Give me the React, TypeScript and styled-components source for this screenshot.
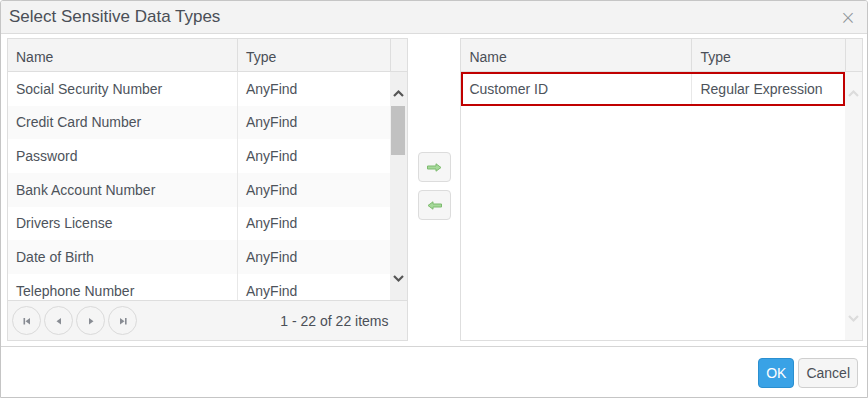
import styled, { createGlobalStyle } from 'styled-components';

const GlobalStyle = createGlobalStyle`
  html, body {
    margin: 0;
    padding: 0;
    background: #fff;
  }
  body {
    font-family: "Liberation Sans", Arial, sans-serif;
    font-size: 14px;
    color: #4d535b;
  }
`;

const leftRows = [
  { name: 'Social Security Number', type: 'AnyFind' },
  { name: 'Credit Card Number', type: 'AnyFind' },
  { name: 'Password', type: 'AnyFind' },
  { name: 'Bank Account Number', type: 'AnyFind' },
  { name: 'Drivers License', type: 'AnyFind' },
  { name: 'Date of Birth', type: 'AnyFind' },
  { name: 'Telephone Number', type: 'AnyFind' },
];

const rightRows = [{ name: 'Customer ID', type: 'Regular Expression' }];

const Dialog = styled.div`
  width: 868px;
  height: 398px;
  box-sizing: border-box;
  border: 1px solid #c5c5c5;
  border-radius: 3px 3px 0 0;
  display: flex;
  flex-direction: column;
  background: #fff;
  overflow: hidden;
`;

const TitleBar = styled.div`
  height: 32px;
  flex: 0 0 auto;
  background: #f3f3f3;
  border-bottom: 1px solid #dcdcdc;
  display: flex;
  align-items: center;
  justify-content: space-between;
  padding: 0 8px 0 8px;
`;

const Title = styled.div`
  font-size: 17px;
  color: #4a4f57;
`;

const CloseBtn = styled.span`
  font-size: 19px;
  font-family: "DejaVu Sans", sans-serif;
  font-weight: 300;
  color: #8e9399;
  line-height: 1;
  margin-right: 3px;
`;

const Content = styled.div`
  flex: 0 0 auto;
  display: flex;
  padding: 4px 4px 5px 6px;
  border-bottom: 1px solid #d5d5d5;
`;

const Grid = styled.div<{ $width: number }>`
  width: ${({ $width }) => $width}px;
  height: 303px;
  box-sizing: border-box;
  border: 1px solid #dedede;
  display: flex;
  flex-direction: column;
  overflow: hidden;
`;

const HeaderRow = styled.div<{ $cols: string }>`
  display: grid;
  grid-template-columns: ${({ $cols }) => $cols};
  height: 32px;
  flex: 0 0 auto;
  background: #f4f4f4;
  border-bottom: 1px solid #dedede;
`;

const HeaderCell = styled.div<{ $last?: boolean }>`
  display: flex;
  align-items: center;
  padding-left: 8px;
  font-size: 14px;
  color: #4a4f57;
  border-right: ${({ $last }) => ($last ? 'none' : '1px solid #dedede')};
  padding-top: 4px;
`;

const Body = styled.div`
  flex: 1;
  display: flex;
  min-height: 0;
`;

const RowsArea = styled.div`
  flex: 1;
  overflow: hidden;
`;

const Row = styled.div<{ $cols: string; $alt?: boolean }>`
  display: grid;
  grid-template-columns: ${({ $cols }) => $cols};
  height: 33.67px;
  background: ${({ $alt }) => ($alt ? '#fafafa' : '#fff')};
`;

const Cell = styled.div<{ $last?: boolean }>`
  display: flex;
  align-items: center;
  padding-left: 8px;
  white-space: nowrap;
  border-right: ${({ $last }) => ($last ? 'none' : '1px solid #e8e8e8')};
`;

const SelectedRow = styled(Row)`
  outline: 2px solid #c00000;
  outline-offset: -2px;
`;

const ScrollTrack = styled.div<{ $faded?: boolean }>`
  width: 17px;
  background: ${({ $faded }) => ($faded ? '#f6f6f6' : '#f0f0f0')};
  display: flex;
  flex-direction: column;
  align-items: center;
`;

const ScrollArrow = styled.div<{ $down?: boolean }>`
  height: 34px;
  box-sizing: border-box;
  display: flex;
  justify-content: center;
  align-items: ${({ $down }) => ($down ? 'flex-start' : 'flex-end')};
  padding: ${({ $down }) => ($down ? '9px 0 0 0' : '0 0 9px 0')};
`;

const ScrollThumb = styled.div`
  width: 14px;
  height: 49px;
  background: #c1c1c1;
`;

const ScrollSpacer = styled.div`
  flex: 1;
`;

const Pager = styled.div`
  height: 39px;
  flex: 0 0 auto;
  background: #f5f5f5;
  border-top: 1px solid #dedede;
  display: flex;
  align-items: center;
  padding: 0 18px 0 4px;
`;

const PagerBtns = styled.div`
  display: flex;
  gap: 3px;
  flex: 1;
`;

const PagerBtn = styled.div`
  width: 27px;
  height: 27px;
  border-radius: 50%;
  border: 1px solid #dadada;
  display: flex;
  align-items: center;
  justify-content: center;
`;

const PagerInfo = styled.div`
  font-size: 14px;
  color: #4a4f57;
`;

const Middle = styled.div`
  width: 53px;
  display: flex;
  flex-direction: column;
  align-items: center;
  padding-top: 114px;
  gap: 8px;
  box-sizing: border-box;
`;

const MoveBtn = styled.div`
  width: 31px;
  height: 28px;
  border: 1px solid #dcdcdc;
  border-radius: 4px;
  background: #f6f6f6;
  display: flex;
  align-items: center;
  justify-content: center;
`;

const Footer = styled.div`
  flex: 1;
  display: flex;
  align-items: center;
  justify-content: flex-end;
  gap: 4px;
  padding-right: 9px;
`;

const Button = styled.button<{ $primary?: boolean }>`
  height: 30px;
  padding: 0 7px;
  font-family: "Liberation Sans", Arial, sans-serif;
  font-size: 14px;
  border-radius: 4px;
  border: 1px solid ${({ $primary }) => ($primary ? '#2a8fd0' : '#cfcfcf')};
  background: ${({ $primary }) => ($primary ? '#39a2e6' : '#f5f5f5')};
  color: ${({ $primary }) => ($primary ? '#fff' : '#4a4f57')};
  margin-top: 1px;
`;

const Chevron = ({ up, faded }: { up?: boolean; faded?: boolean }) => (
  <svg width="11" height="8" viewBox="0 0 11 8">
    <path
      d={up ? 'M1 7 L5.5 2.5 L10 7' : 'M1 1 L5.5 5.5 L10 1'}
      fill="none"
      stroke={faded ? '#dcdcdc' : '#555'}
      strokeWidth="2.2"
    />
  </svg>
);

const GreenArrow = ({ left }: { left?: boolean }) => (
  <svg width="15" height="9" viewBox="0 0 15 9" style={{ transform: left ? 'scaleX(-1)' : undefined }}>
    <path d="M0.5 3 H9 V0.8 L14 4.5 L9 8.2 V6 H0.5 Z" fill="#a6d99a" stroke="#7dbb6e" strokeWidth="1" />
  </svg>
);

const PagerIcon = ({ kind }: { kind: 'first' | 'prev' | 'next' | 'last' }) => {
  const c = '#888c93';
  return (
    <svg width="10" height="10" viewBox="0 0 10 10">
      {kind === 'first' && (
        <>
          <rect x="1.5" y="2" width="1.6" height="6.5" fill={c} />
          <path d="M8 2 L3.5 5.25 L8 8.5 Z" fill={c} />
        </>
      )}
      {kind === 'prev' && <path d="M7 2 L2.5 5.25 L7 8.5 Z" fill={c} />}
      {kind === 'next' && <path d="M3 2 L7.5 5.25 L3 8.5 Z" fill={c} />}
      {kind === 'last' && (
        <>
          <path d="M2 2 L6.5 5.25 L2 8.5 Z" fill={c} />
          <rect x="7" y="2" width="1.6" height="6.5" fill={c} />
        </>
      )}
    </svg>
  );
};

const LEFT_COLS = '230px 153px';
const RIGHT_COLS = '231px 154px';

const App = () => {
  return (
    <>
      <GlobalStyle />
      <Dialog>
        <TitleBar>
          <Title>Select Sensitive Data Types</Title>
          <CloseBtn>×</CloseBtn>
        </TitleBar>
        <Content>
          <Grid $width={401}>
            <HeaderRow $cols={`${LEFT_COLS} 1fr`}>
              <HeaderCell>Name</HeaderCell>
              <HeaderCell>Type</HeaderCell>
              <HeaderCell $last />
            </HeaderRow>
            <Body>
              <RowsArea>
                {leftRows.map((r, i) => (
                  <Row key={r.name} $cols={LEFT_COLS} $alt={i % 2 === 1}>
                    <Cell>{r.name}</Cell>
                    <Cell $last>{r.type}</Cell>
                  </Row>
                ))}
              </RowsArea>
              <ScrollTrack>
                <ScrollArrow>
                  <Chevron up />
                </ScrollArrow>
                <ScrollThumb />
                <ScrollSpacer />
                <ScrollArrow $down>
                  <Chevron />
                </ScrollArrow>
              </ScrollTrack>
            </Body>
            <Pager>
              <PagerBtns>
                <PagerBtn><PagerIcon kind="first" /></PagerBtn>
                <PagerBtn><PagerIcon kind="prev" /></PagerBtn>
                <PagerBtn><PagerIcon kind="next" /></PagerBtn>
                <PagerBtn><PagerIcon kind="last" /></PagerBtn>
              </PagerBtns>
              <PagerInfo>1 - 22 of 22 items</PagerInfo>
            </Pager>
          </Grid>
          <Middle>
            <MoveBtn><GreenArrow /></MoveBtn>
            <MoveBtn><GreenArrow left /></MoveBtn>
          </Middle>
          <Grid $width={403}>
            <HeaderRow $cols={`${RIGHT_COLS} 1fr`}>
              <HeaderCell>Name</HeaderCell>
              <HeaderCell>Type</HeaderCell>
              <HeaderCell $last />
            </HeaderRow>
            <Body>
              <RowsArea>
                {rightRows.map((r) => (
                  <SelectedRow key={r.name} $cols={RIGHT_COLS}>
                    <Cell>{r.name}</Cell>
                    <Cell $last>{r.type}</Cell>
                  </SelectedRow>
                ))}
              </RowsArea>
              <ScrollTrack $faded>
                <ScrollArrow>
                  <Chevron up faded />
                </ScrollArrow>
                <ScrollSpacer />
                <ScrollArrow $down>
                  <Chevron faded />
                </ScrollArrow>
              </ScrollTrack>
            </Body>
          </Grid>
        </Content>
        <Footer>
          <Button $primary>OK</Button>
          <Button>Cancel</Button>
        </Footer>
      </Dialog>
    </>
  );
};

export default App;
